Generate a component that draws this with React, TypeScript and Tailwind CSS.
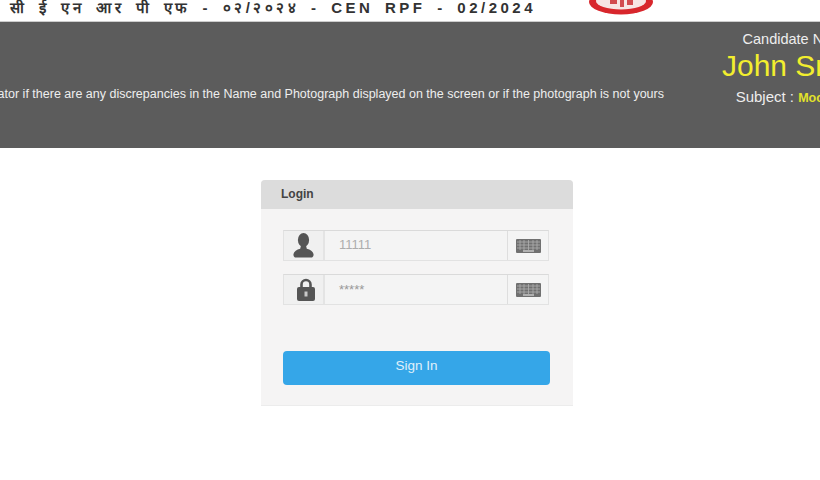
import React from 'react';

const KeyboardIcon: React.FC = () => (
  <svg width="25" height="14" viewBox="0 0 25 14" className="blur-[0.4px]">
    <rect width="25" height="14" rx="1" fill="#707070" />
    <path d="M1 3H24M1 6H24M1 9H24M4 1V11M8 1V11M12.500 1V11M17 1V11M21 1V11" stroke="#b0b0b0" strokeWidth="0.8" />
    <rect x="7" y="11" width="11" height="2" fill="#b0b0b0" />
  </svg>
);

const UserIcon: React.FC = () => (
  <svg width="21" height="25" viewBox="0 0 20 25" fill="#555555">
    <ellipse cx="10" cy="7" rx="5.600" ry="7" />
    <path d="M7.500 12.500h5l.8 3.200c3.500 1 6.200 2.500 6.700 5.300.3 2-.8 3.500-2.500 3.500H2.500C.8 24.500-.3 23 0 21c.5-2.800 3.200-4.300 6.700-5.300z" />
  </svg>
);

const LockIcon: React.FC = () => (
  <svg width="18" height="23" viewBox="0 0 18 23" className="ml-[4px]">
    <path d="M4.500 10V6.500a4.500 4.500 0 0 1 9 0V10" fill="none" stroke="#555555" strokeWidth="2.600" />
    <rect y="9" width="18" height="14" rx="2" fill="#555555" />
    <rect x="7.500" y="13.500" width="3" height="5" fill="#c8c8c8" />
  </svg>
);

const Logo: React.FC = () => (
  <svg width="64" height="15" viewBox="0 0 64 15" className="blur-[0.4px]">
    <ellipse cx="32" cy="2" rx="32" ry="12.500" fill="#d8262c" />
    <ellipse cx="32" cy="1" rx="25" ry="8.500" fill="#f7e4e4" />
    <path d="M21 0h7v4h-7zM31 0h4v7h-4zM38 0h6v5h-6z" fill="#d24a4f" />
  </svg>
);

const LoginInput: React.FC<{ value: string; icon: React.ReactNode; valueClass: string }> = ({ value, icon, valueClass }) => (
  <div className="flex h-[31px] w-[266px] border border-[#e2e2e2] border-t-[#dadada] bg-[#f4f4f4]">
    <div className="flex w-[41px] items-center justify-center border-r-2 border-[#e4e4e4] bg-[#f0f0f0]">{icon}</div>
    <div className={valueClass}>{value}</div>
    <div className="flex w-[41px] items-center justify-center border-l border-[#dedede]">
      <KeyboardIcon />
    </div>
  </div>
);

export default function App() {
  return (
    <div className="h-[480px] w-[820px] overflow-hidden bg-white font-['Liberation_Sans',sans-serif]">
      {/* Exam title strip */}
      <div className="flex h-[22px] items-start overflow-hidden border-b border-[#cccccc]">
        <div className="w-[586px] shrink-0 whitespace-nowrap pl-[10px] text-[15px] font-bold leading-[16px] tracking-[3.500px] [word-spacing:4px] text-[#333333]">
          सी ई एन आर पी एफ - ०२/२०२४ - CEN RPF - 02/2024
        </div>
        <div className="ml-[3px] shrink-0">
          <Logo />
        </div>
      </div>

      {/* Candidate banner */}
      <div className="flex h-[126px] items-start bg-[#5c5c5c] text-[#eeeeee]">
        <div className="mt-[64px] flex w-[664px] shrink-0 justify-end whitespace-nowrap text-[12.500px] leading-4">
          Please inform the Invigilator if there are any discrepancies in the Name and Photograph displayed on the screen or if the photograph is not yours
        </div>
        <div className="ml-[33px] mt-[8px] w-[200px] shrink-0 text-center">
          <div className="text-[14.500px] leading-[18px]">Candidate Name</div>
          <div className="text-[30px] leading-[36px] text-[#f2ee2e]">John Smith</div>
          <div className="mt-[4px] text-[15px] leading-[18px]">
            Subject : <span className="text-[12.500px] font-semibold text-[#e2e22a]">Mock Test</span>
          </div>
        </div>
      </div>

      {/* Login card */}
      <div className="ml-[261px] mt-[32px] h-[226px] w-[312px] rounded-t-sm border-b border-[#ececec] bg-[#f5f4f4]">
        <div className="flex h-[29px] items-center rounded-t-sm bg-[#dcdcdc] pb-[1px] pl-[20px] text-xs font-bold text-[#444444]">
          Login
        </div>
        <div className="flex flex-col gap-[13px] pl-[22px] pt-[21px]">
          <LoginInput
            value="11111"
            icon={<UserIcon />}
            valueClass="flex flex-1 items-center pb-[2px] pl-[14px] text-[13px] text-[#adadad]"
          />
          <LoginInput
            value="*****"
            icon={<LockIcon />}
            valueClass="flex flex-1 items-center pl-[14px] text-[13px] text-[#999999]"
          />
        </div>
        <div className="ml-[22px] mt-[46px] flex h-[34px] w-[267px] items-center justify-center rounded-sm bg-[#35a6e8] pb-[3px] text-[13.500px] text-[#e0f0fa]">
          Sign In
        </div>
      </div>
    </div>
  );
}
